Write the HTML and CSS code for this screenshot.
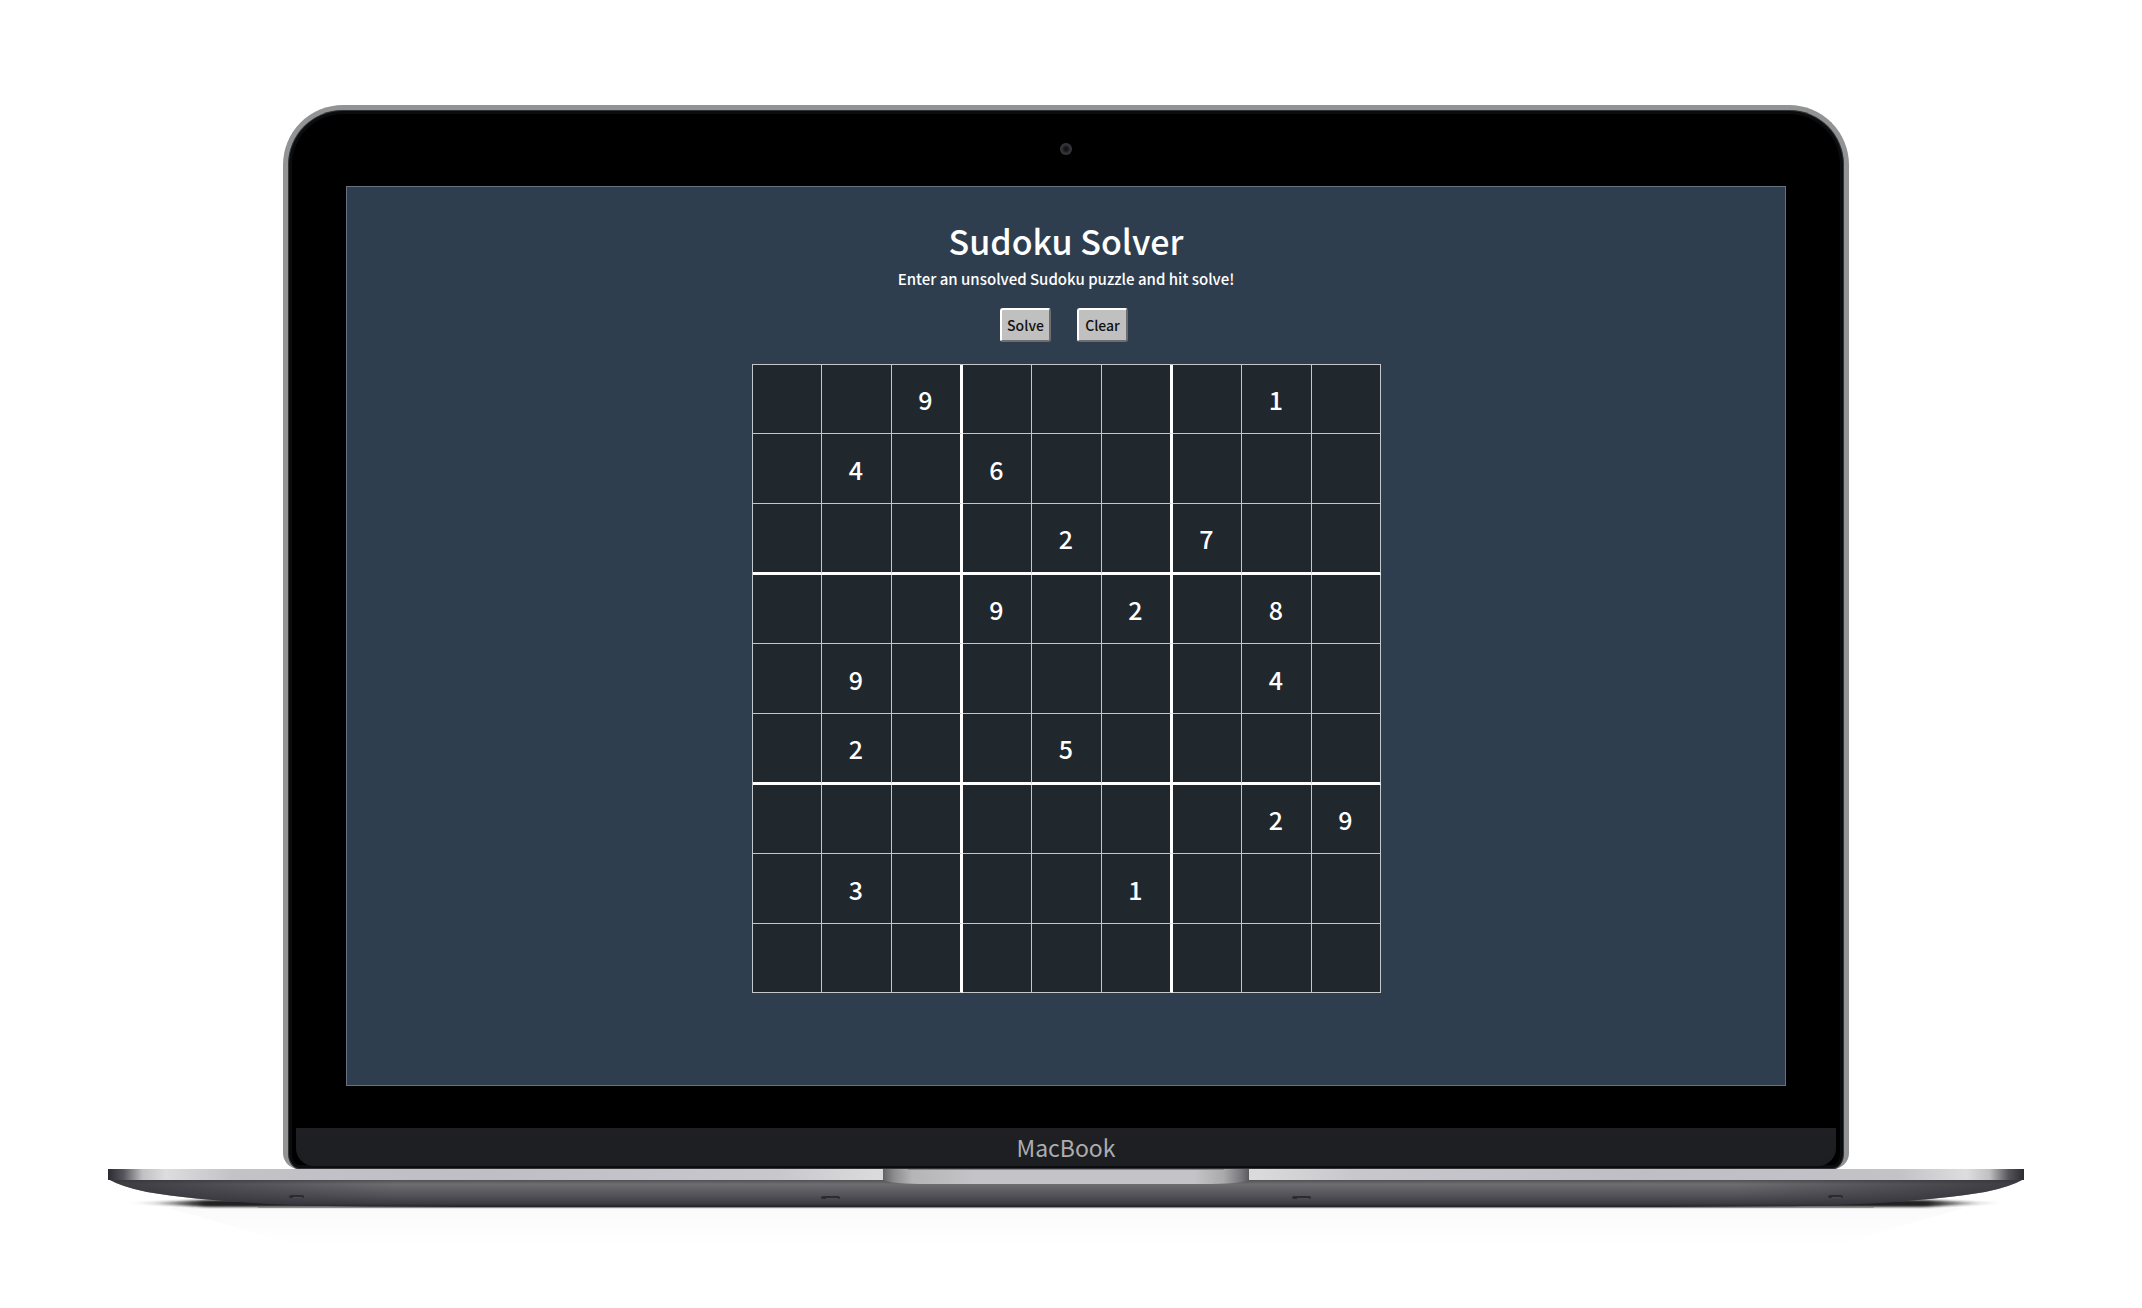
FILE: index.html
```html
<!DOCTYPE html>
<html lang="en">
<head>
<meta charset="utf-8">
<title>Sudoku Solver</title>
<link rel="stylesheet" href="styles.css">
</head>
<body>
<div class="device">
  <div class="lid">
    <div class="camera-bar"><span class="camera"></span></div>
    <main class="screen">
      <h1 class="title">Sudoku Solver</h1>
      <p class="intro">Enter an unsolved Sudoku puzzle and hit solve!</p>
      <div class="actions">
        <button class="action" type="button" id="solve">Solve</button>
        <button class="action" type="button" id="clear">Clear</button>
      </div>
      <table class="board" aria-label="Sudoku puzzle"><tbody id="board"></tbody></table>
    </main>
    <div class="chin"><span class="brand">MacBook</span></div>
  </div>
  <svg class="base" viewBox="0 0 1916 80" preserveAspectRatio="none" aria-hidden="true">
    <defs>
      <linearGradient id="edge">
        <stop offset="0" stop-color="#2c2b31"/><stop offset=".008" stop-color="#55545a"/>
        <stop offset=".018" stop-color="#c0c0c3"/><stop offset=".03" stop-color="#dddddf"/>
        <stop offset=".065" stop-color="#c3c2c7"/><stop offset=".2" stop-color="#bfbec5"/>
        <stop offset=".35" stop-color="#c8c7cc"/><stop offset=".4" stop-color="#dadadc"/>
        <stop offset=".6" stop-color="#dadadc"/><stop offset=".65" stop-color="#c8c7cc"/>
        <stop offset=".8" stop-color="#bfbec5"/><stop offset=".935" stop-color="#c3c2c7"/>
        <stop offset=".97" stop-color="#dddddf"/><stop offset=".982" stop-color="#c0c0c3"/>
        <stop offset=".992" stop-color="#55545a"/><stop offset="1" stop-color="#2c2b31"/>
      </linearGradient>
      <linearGradient id="body" x1="0" y1="0" x2="0" y2="1">
        <stop offset="0" stop-color="#4b4a4f"/><stop offset=".12" stop-color="#626166"/>
        <stop offset=".18" stop-color="#6e6d72"/><stop offset=".6" stop-color="#525157"/>
        <stop offset=".88" stop-color="#3c3b41"/><stop offset="1" stop-color="#212026"/>
      </linearGradient>
      <linearGradient id="ends">
        <stop offset="0" stop-color="#302f35" stop-opacity=".8"/><stop offset=".15" stop-color="#302f35" stop-opacity="0"/>
        <stop offset=".85" stop-color="#302f35" stop-opacity="0"/><stop offset="1" stop-color="#302f35" stop-opacity=".8"/>
      </linearGradient>
      <linearGradient id="notch">
        <stop offset="0" stop-color="#626166"/><stop offset=".03" stop-color="#8c8b8e"/>
        <stop offset=".08" stop-color="#b5b5b6"/><stop offset=".25" stop-color="#c4c3c8"/>
        <stop offset=".85" stop-color="#c4c3c8"/><stop offset=".93" stop-color="#aaaaac"/>
        <stop offset=".98" stop-color="#77767a"/><stop offset="1" stop-color="#5b5a5f"/>
      </linearGradient>
      <linearGradient id="floor" x1="0" y1="0" x2="0" y2="1">
        <stop offset="0" stop-color="#fafafa"/><stop offset="1" stop-color="#ffffff"/>
      </linearGradient>
      <linearGradient id="contact">
        <stop offset="0" stop-color="#222" stop-opacity="0"/><stop offset=".015" stop-color="#222" stop-opacity=".2"/>
        <stop offset=".04" stop-color="#222" stop-opacity="1"/><stop offset=".96" stop-color="#222" stop-opacity="1"/>
        <stop offset=".985" stop-color="#222" stop-opacity=".2"/><stop offset="1" stop-color="#222" stop-opacity="0"/>
      </linearGradient>
      <filter id="soft" x="-10%" y="-100%" width="120%" height="300%"><feGaussianBlur stdDeviation="4 1"/></filter>
    </defs>
    <path d="M60 39H1856L1720 78H196Z" fill="url(#floor)"/>
    <path d="M20 34L100 31H1816L1896 34L1816 38H100Z" fill="url(#contact)" filter="url(#soft)"/>
    <path d="M150 38H1766V39H150Z" fill="#8d8c8e"/>
    <path d="M0 10Q14 18 39 23Q105 34 220 37Q300 38 400 38H1516Q1616 38 1696 37Q1811 34 1877 23Q1902 18 1916 10Z" fill="url(#body)"/>
    <path d="M0 10Q14 18 39 23Q105 34 220 37Q300 38 400 38H1516Q1616 38 1696 37Q1811 34 1877 23Q1902 18 1916 10Z" fill="url(#ends)"/>
    <path d="M0 0H1916V11H0Z" fill="url(#edge)"/>
    <path d="M775 0H1141V11Q1134 15 1095 15H821Q782 15 775 11Z" fill="url(#notch)"/>
    <path d="M800 0H1116V1H800Z" fill="#86858a"/>
    <g fill="#2c2b30">
      <rect x="181" y="26" width="15" height="3" rx="2"/><rect x="713" y="27" width="19" height="3" rx="2"/>
      <rect x="1184" y="27" width="19" height="3" rx="2"/><rect x="1720" y="26" width="15" height="3" rx="2"/>
    </g>
    <g fill="#4c4b50">
      <rect x="185" y="28" width="9" height="1"/><rect x="718" y="29" width="12" height="1"/>
      <rect x="1189" y="29" width="12" height="1"/><rect x="1724" y="28" width="9" height="1"/>
    </g>
  </svg>
</div>
<script src="script.js"></script>
</body>
</html>
```
FILE: styles.css
```css
* {
  box-sizing: border-box;
}

body {
  margin: 0;
  background: #fff;
  font-family: "Noto Sans CJK JP", "Noto Sans", sans-serif;
}

.device {
  padding: 105px 118px 60px 108px;
}

.lid {
  margin: 0 175px;
  padding: 0 8px;
  border: 5px solid #929394;
  border-bottom: 0;
  border-radius: 60px 60px 16px 16px;
  background: #000;
  box-shadow: inset 0 0 0 1px #303132, inset 0 0 0 4px #0b0c0d;
}

.camera-bar {
  display: flex;
  align-items: center;
  justify-content: center;
  height: 76px;
  padding-top: 2px;
}

.camera {
  width: 12px;
  height: 12px;
  border-radius: 50%;
  background: radial-gradient(circle, #10141d 20%, #2e2e31 45%, #48484a);
}

.screen {
  display: flex;
  flex-direction: column;
  align-items: center;
  aspect-ratio: 16 / 10;
  margin: 0 50px;
  padding-top: 30px;
  border: 1px solid #697084;
  background: #2f3e4e;
  color: #fff;
}

.title {
  margin: 0;
  font-size: 34px;
  font-weight: 500;
  line-height: 48px;
}

.intro {
  margin: 0;
  font-size: 15px;
  font-weight: 500;
  line-height: 28px;
}

.actions {
  display: flex;
  gap: 26px;
  margin: 15px 0 22px;
  padding-right: 4px;
}

.action {
  width: 51px;
  height: 34px;
  padding: 0;
  border: 2px solid;
  border-color: #fff #6e6e6e #6e6e6e #fff;
  border-radius: 3px;
  background: #c0c0c0;
  color: #111;
  font: 500 14px/28px "Noto Sans CJK JP", "Noto Sans", sans-serif;
}

.board {
  border: solid #c4c8ca;
  border-width: 1px 0 0 1px;
  border-spacing: 0;
  background: #20282d;
}

.cell {
  padding: 0;
  border: solid #c4c8ca;
  border-width: 0 1px 1px 0;
}

.cell:nth-child(3n):not(:last-child) {
  border-right: 3px solid #fff;
}

.row:nth-child(3n):not(:last-child) .cell {
  border-bottom: 3px solid #fff;
}

.digit {
  display: block;
  width: 68px;
  height: 68px;
  padding: 0;
  border: 0;
  outline: 0;
  background: transparent;
  color: #fff;
  font: 500 25px/68px "Noto Sans CJK JP", "Noto Sans", sans-serif;
  text-align: center;
}

.cell:nth-child(3n + 2) .digit {
  width: 69px;
}

.row:nth-child(3n + 2) .digit {
  height: 69px;
}

.chin {
  display: flex;
  align-items: center;
  justify-content: center;
  height: 38px;
  margin: 42px 0 0;
  border-radius: 0 0 18px 18px;
  background: linear-gradient(#202024, #1c1e22);
}

.lid::after {
  content: "";
  display: block;
  height: 3px;
}

.brand {
  color: #acadaf;
  font-size: 23px;
  font-weight: 400;
  line-height: 38px;
}

.base {
  display: block;
  width: 100%;
  height: 80px;
}
```
FILE: script.js
```js
const puzzle = [
  "..9....1.",
  ".4.6.....",
  "....2.7..",
  "...9.2.8.",
  ".9.....4.",
  ".2..5....",
  ".......29",
  ".3...1...",
  "........."
];
const board = document.getElementById("board");

puzzle.forEach((line, r) => {
  const row = board.insertRow();
  row.className = "row";
  [...line].forEach((value, c) => {
    const cell = row.insertCell();
    cell.className = "cell";
    const input = document.createElement("input");
    input.className = "digit";
    input.type = "text";
    input.inputMode = "numeric";
    input.maxLength = 1;
    input.value = value === "." ? "" : value;
    input.setAttribute("aria-label", `Row ${r + 1}, column ${c + 1}`);
    cell.append(input);
  });
});

const fields = [...document.querySelectorAll(".digit")];

function fits(grid, pos, digit) {
  const r = Math.floor(pos / 9), c = pos % 9;
  return grid.every((d, i) => {
    if (d !== digit || i === pos) return true;
    const y = Math.floor(i / 9), x = i % 9;
    const sameBox = Math.floor(y / 3) === Math.floor(r / 3) && Math.floor(x / 3) === Math.floor(c / 3);
    return y !== r && x !== c && !sameBox;
  });
}

function solve(grid) {
  const pos = grid.indexOf(0);
  if (pos < 0) return true;
  for (let d = 1; d <= 9; d++) {
    if (fits(grid, pos, d)) {
      grid[pos] = d;
      if (solve(grid)) return true;
      grid[pos] = 0;
    }
  }
  return false;
}

document.getElementById("solve").addEventListener("click", () => {
  const grid = fields.map(f => Number(f.value) || 0);
  if (solve(grid)) grid.forEach((d, i) => { fields[i].value = d; });
});

document.getElementById("clear").addEventListener("click", () => {
  fields.forEach(f => { f.value = ""; });
});
```
